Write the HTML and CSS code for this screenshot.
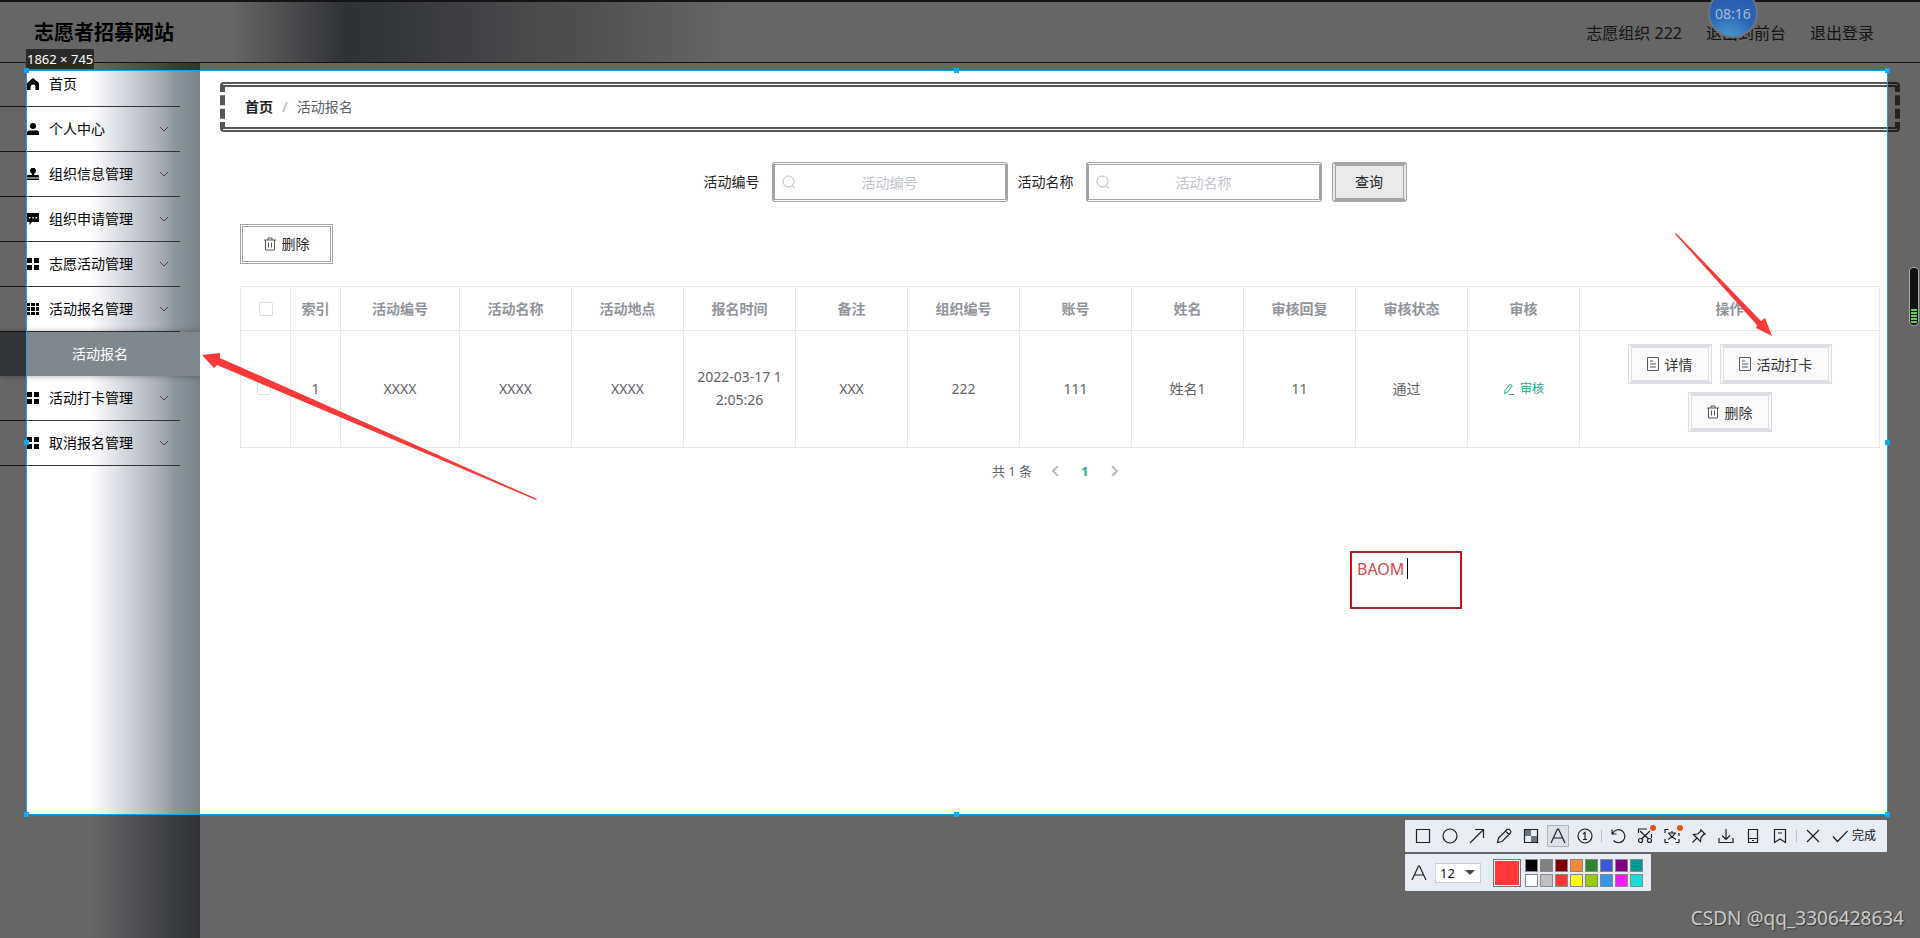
FILE: index.html
```html
<!DOCTYPE html>
<html lang="zh-CN">
<head>
<meta charset="utf-8">
<title>志愿者招募网站</title>
<link rel="stylesheet" href="styles.css">
</head>
<body>
<svg class="defs" aria-hidden="true">
  <symbol id="chev" viewBox="0 0 10 10"><path d="M1 3l4 4 4-4" fill="none" stroke="currentColor"/></symbol>
  <symbol id="grid4" viewBox="0 0 12 12"><path d="M0 0h5v5H0zM7 0h5v5H7zM0 7h5v5H0zM7 7h5v5H7z"/></symbol>
  <symbol id="grid9" viewBox="0 0 12 12"><path d="M0 0h3v3H0zM4 0h4v3H4zM9 0h3v3H9zM0 4h3v4H0zM4 4h4v4H4zM9 4h3v4H9zM0 9h3v3H0zM4 9h4v3H4zM9 9h3v3H9z"/></symbol>
  <symbol id="trash" viewBox="0 0 12 14"><path d="M0 3h12M4 3V1h4v2M1.500 3v10h9V3M4.500 5.500v5M7.500 5.500v5" fill="none" stroke="currentColor"/></symbol>
  <symbol id="doc" viewBox="0 0 12 14"><path d="M.5.5h11v13H.5zM3 4h3M3 7h6M3 10h6" fill="none" stroke="currentColor"/></symbol>
  <symbol id="search" viewBox="0 0 14 14"><circle cx="6.500" cy="6.500" r="5.500" fill="none" stroke="currentColor"/><path d="M10 11l3 2" stroke="currentColor"/></symbol>
</svg>
<div class="page">
  <header class="header">
    <h1 class="brand">志愿者招募网站</h1>
    <nav class="user">
      <span>志愿组织 222</span>
      <a href="#">退出到前台</a>
      <a href="#">退出登录</a>
    </nav>
  </header>
  <div class="body">
    <nav class="sidebar">
      <ul class="menu">
        <li><a class="item" href="#"><svg class="mi" viewBox="0 0 12 12"><path d="M6 0l6 5v7H8.500V8.500a2.500 2 0 0 0-5 0V12H0V5z"/></svg><span>首页</span></a></li>
        <li><a class="item" href="#"><svg class="mi" viewBox="0 0 12 12"><circle cx="6" cy="3" r="3"/><path d="M0 12V9.500Q0 7.500 2 7.500h8q2 0 2 2V12z"/></svg><span>个人中心</span><svg class="chev"><use href="#chev"/></svg></a></li>
        <li><a class="item" href="#"><svg class="mi" viewBox="0 0 12 12"><path d="M4.800 5.500a3 3 0 1 1 2.400 0V7H11q1 0 1 1v1.500H0V8q0-1 1-1h3.800zM0 10.500h12V12H0z"/></svg><span>组织信息管理</span><svg class="chev"><use href="#chev"/></svg></a></li>
        <li><a class="item" href="#"><svg class="mi" viewBox="0 0 12 12"><path d="M0 0h12v9H5l-2.500 3V9H0zM2 4v1.500h1.500V4zm3.300 0v1.500h1.500V4zm3.200 0v1.500H10V4z" fill-rule="evenodd"/></svg><span>组织申请管理</span><svg class="chev"><use href="#chev"/></svg></a></li>
        <li><a class="item" href="#"><svg class="mi"><use href="#grid4"/></svg><span>志愿活动管理</span><svg class="chev"><use href="#chev"/></svg></a></li>
        <li><a class="item" href="#"><svg class="mi"><use href="#grid9"/></svg><span>活动报名管理</span><svg class="chev"><use href="#chev"/></svg></a>
          <a class="sub" href="#">活动报名</a></li>
        <li><a class="item" href="#"><svg class="mi"><use href="#grid4"/></svg><span>活动打卡管理</span><svg class="chev"><use href="#chev"/></svg></a></li>
        <li><a class="item" href="#"><svg class="mi"><use href="#grid4"/></svg><span>取消报名管理</span><svg class="chev"><use href="#chev"/></svg></a></li>
      </ul>
    </nav>
    <main class="content">
      <div class="crumb"><a href="#">首页</a><i>/</i><span>活动报名</span></div>
      <section class="panel">
        <form class="search">
          <label for="f-no">活动编号</label>
          <div class="field"><svg class="lens"><use href="#search"/></svg><input id="f-no" type="text" placeholder="活动编号"></div>
          <label for="f-name">活动名称</label>
          <div class="field"><svg class="lens"><use href="#search"/></svg><input id="f-name" type="text" placeholder="活动名称"></div>
          <button class="query" type="button">查询</button>
        </form>
        <button class="remove" type="button"><svg class="bi"><use href="#trash"/></svg>删除</button>
        <table class="grid">
          <colgroup><col class="c-s"><col class="c-s"><col class="c-l"><col><col><col><col><col><col><col><col><col><col><col class="c-x"></colgroup>
          <thead><tr>
            <th><input type="checkbox" aria-label="全选"></th><th>索引</th><th>活动编号</th><th>活动名称</th><th>活动地点</th><th>报名时间</th><th>备注</th><th>组织编号</th><th>账号</th><th>姓名</th><th>审核回复</th><th>审核状态</th><th>审核</th><th>操作</th>
          </tr></thead>
          <tbody><tr>
            <td class="pick"><input type="checkbox" aria-label="选择第1行"></td><td>1</td><td>XXXX</td><td>XXXX</td><td>XXXX</td><td>2022-03-17 12:05:26</td><td>XXX</td><td>222</td><td>111</td><td>姓名1</td><td>11</td><td class="state">通过</td>
            <td><button class="audit" type="button"><svg viewBox="0 0 12 12"><path d="M2 7.500L7 1.200l2.200 1.700L4.500 9.200 1.600 10.600zM5.500 11.500H11" fill="none" stroke="currentColor"/></svg>审核</button></td>
            <td><div class="ops">
              <button type="button"><svg class="bi"><use href="#doc"/></svg>详情</button>
              <button type="button"><svg class="bi"><use href="#doc"/></svg>活动打卡</button>
              <button type="button"><svg class="bi"><use href="#trash"/></svg>删除</button>
            </div></td>
          </tr></tbody>
        </table>
        <div class="pager">
          <span>共 1 条</span>
          <button type="button" aria-label="上一页"><svg viewBox="0 0 10 10"><path d="M7 0L2 5l5 5"/></svg></button>
          <button class="now" type="button">1</button>
          <button type="button" aria-label="下一页"><svg viewBox="0 0 10 10"><path d="M3 0l5 5-5 5"/></svg></button>
        </div>
      </section>
    </main>
  </div>

  <div class="frame">
    <span class="size">1862 × 745</span>
    <b class="h tl"></b><b class="h tc"></b><b class="h tr"></b><b class="h ml"></b><b class="h mr"></b><b class="h bl"></b><b class="h bc"></b><b class="h br"></b>
    <div class="tools">
      <div class="bar">
        <button type="button" aria-label="矩形"><svg viewBox="0 0 20 20"><path d="M3.500 3.500h13v13h-13z"/></svg></button>
        <button type="button" aria-label="椭圆"><svg viewBox="0 0 20 20"><circle cx="10" cy="10" r="7"/></svg></button>
        <button type="button" aria-label="箭头"><svg viewBox="0 0 20 20"><path d="M3 17L16.500 3.500M8 3.500h8.500V12"/></svg></button>
        <button type="button" aria-label="画笔"><svg viewBox="0 0 20 20"><path d="M3.500 16.500l1-4.500L13 3.500q2-1 3.500 1 1 1.500 0 2.500L8 15.500zM11.500 5l3.500 3.500"/></svg></button>
        <button type="button" aria-label="马赛克"><svg viewBox="0 0 20 20"><path d="M3.500 3.500h13v13h-13z"/><path class="mz" d="M4 4h6v6H4zM10 10h6v6h-6z"/></svg></button>
        <button class="on" type="button" aria-label="文字"><svg viewBox="0 0 20 20"><path d="M3 17L9.500 3h1L17 17M5.500 12h9"/></svg></button>
        <button type="button" aria-label="序号"><svg viewBox="0 0 20 20"><circle cx="10" cy="10" r="7"/><path d="M8 8l2-1.500V13M8 13.500h4"/></svg></button>
        <hr>
        <button type="button" aria-label="撤销"><svg viewBox="0 0 20 20"><path d="M4 3.500v4.500h4.500M4.500 7.500A6.500 6.500 0 1 1 5.500 14.500"/></svg></button>
        <button type="button" aria-label="截图识别"><svg viewBox="0 0 20 20"><path d="M3.500 7V3H12M16.500 8v4M5 5l8.500 8M15 5l-8.500 8"/><circle cx="5.500" cy="14.500" r="2"/><circle cx="14.500" cy="14.500" r="2"/></svg><em></em></button>
        <button type="button" aria-label="翻译"><svg viewBox="0 0 20 20"><path d="M3 7V3.500h3.500M3 13v3.500h3.500M17 13v3.500h-3.500M17 7v3M6 7h8M10 5v2M6 13.500Q11 11 13 7.500M14 13.500Q9 11 7 7.500"/></svg><em></em></button>
        <button type="button" aria-label="固定"><svg viewBox="0 0 20 20"><path d="M3.500 16.500l5-5M4.500 8.500l7 7 .5-4 3-3.500 1.500.5-5-5 .5 1.500L8.500 8z"/></svg></button>
        <button type="button" aria-label="保存"><svg viewBox="0 0 20 20"><path d="M10 3v10M6 9.500l4 4 4-4M3 12v4.500h14V12"/></svg></button>
        <button type="button" aria-label="发送到手机"><svg viewBox="0 0 20 20"><path d="M5.500 3.500h9v13h-9zM5.500 12.500h9M9 14.500h2"/></svg></button>
        <button type="button" aria-label="收藏"><svg viewBox="0 0 20 20"><path d="M4.500 3.500h11v13L10 13l-5.500 3.500zM8 7h4"/></svg></button>
        <hr>
        <button type="button" aria-label="关闭"><svg viewBox="0 0 20 20"><path d="M4 4l12 12M16 4L4 16"/></svg></button>
        <button class="done" type="button"><svg viewBox="0 0 20 20"><path d="M3 10.500l4.500 5L17.500 5"/></svg>完成</button>
      </div>
      <div class="bar second">
        <svg class="ta" viewBox="0 0 20 20"><path d="M3 17L9.500 3h1L17 17M5.500 12h9"/></svg>
        <div class="pt"><select aria-label="字号"><option>12</option></select></div>
        <button class="cur" type="button" aria-label="当前颜色"></button>
        <div class="pal">
          <button class="k1" type="button" aria-label="黑"></button><button class="k2" type="button" aria-label="灰"></button><button class="k3" type="button" aria-label="深红"></button><button class="k4" type="button" aria-label="橙"></button><button class="k5" type="button" aria-label="绿"></button><button class="k6" type="button" aria-label="蓝"></button><button class="k7" type="button" aria-label="紫"></button><button class="k8" type="button" aria-label="青"></button>
          <button class="k9" type="button" aria-label="白"></button><button class="k10" type="button" aria-label="浅灰"></button><button class="k11" type="button" aria-label="红"></button><button class="k12" type="button" aria-label="黄"></button><button class="k13" type="button" aria-label="浅绿"></button><button class="k14" type="button" aria-label="浅蓝"></button><button class="k15" type="button" aria-label="品红"></button><button class="k16" type="button" aria-label="浅青"></button>
        </div>
      </div>
    </div>
  </div>
  <svg class="arrow a1" viewBox="0 0 336 148"><path d="M0 3L18 1 18 6 335 147 334 148 15 13 12 16z"/></svg>
  <svg class="arrow a2" viewBox="0 0 98 104"><path d="M97 103L81 95 82 92 0 1 1 0 86 88 90 85z"/></svg>
  <div class="note"><textarea aria-label="标注文字">BAOM</textarea><i></i></div>
  <div class="clock">08:16</div>
  <div class="meter"><i></i></div>
  <div class="mark">CSDN @qq_3306428634</div>
</div>
</body>
</html>
```
FILE: styles.css
```css
* { box-sizing: border-box; }
body {
  margin: 0;
  font: 14px/20px "Noto Sans", "Noto Sans CJK SC", sans-serif;
  color: #222;
  background: #fff;
}
a { color: inherit; text-decoration: none; }
button, input, select, textarea { font: inherit; color: inherit; margin: 0; }
button { padding: 0; border: 0; background: none; }
.defs { position: absolute; width: 0; height: 0; }
.page {
  position: relative;
  display: flex;
  flex-direction: column;
  min-height: 100vh;
  overflow: hidden;
}

/* header */
.header {
  display: flex;
  align-items: center;
  justify-content: space-between;
  height: 63px;
  padding: 2px 46px 0 34px;
  border-top: 2px solid #333;
  border-bottom: 1px solid #333;
  background: linear-gradient(90deg, #fff 0, #fff 12%, #d2d4d6 14%, #767d87 18%, #858b94 21%, #b3b5ba 27%, #cfd2d2 32%, #fff 38%);
}
.brand { margin: 0; font-size: 20px; line-height: 28px; color: #000; }
.user { display: flex; gap: 24px; font-size: 16px; line-height: 24px; color: #333; }

/* sidebar */
.body { display: flex; flex: 1; }
.sidebar {
  flex: none;
  width: 200px;
  overflow: hidden;
  background: linear-gradient(90deg, #fff 0, #fff 45%, #c8ccd4 67%, #a3a8b0 82%, #8c979e 87%, #78828a 100%);
}
.menu { list-style: none; margin: -1px 0 0; padding: 0; }
.item {
  display: flex;
  align-items: center;
  width: 180px;
  height: 45px;
  padding: 0 11px 0 27px;
  border-bottom: 1px solid #333;
  color: #000;
}
.mi { width: 12px; height: 12px; margin-right: 10px; fill: #000; }
.chev { width: 10px; height: 10px; margin-left: auto; color: #444; }
.sub {
  display: block;
  height: 44px;
  padding-left: 72px;
  line-height: 44px;
  color: #fff;
  background: #80888f;
  box-shadow: 0 0 6px rgba(0, 0, 0, .35);
}

/* content */
.content { flex: 1; min-width: 0; padding: 19px 20px; }
.crumb {
  display: flex;
  align-items: center;
  height: 50px;
  padding: 0 20px;
  border: 5px solid #555;
  border-style: double dashed;
  border-radius: 4px;
}
.crumb a { font-weight: 700; }
.crumb i { margin: 0 9px; font-style: normal; font-weight: 700; color: #c0c4cc; }
.crumb span { color: #606266; }
.panel { padding: 30px 20px 0; }
.search { display: flex; justify-content: center; align-items: center; gap: 10px; padding-right: 10px; }
.search label { margin-right: 2px; }
.field { position: relative; width: 236px; }
.field input {
  display: block;
  width: 100%;
  height: 40px;
  padding: 0 30px;
  border: 3px solid #a4a4a4;
  border-style: double solid;
  border-radius: 3px;
  background: #fff;
  text-align: center;
  outline: 0;
}
.field input::placeholder { color: #c0c4cc; opacity: 1; }
.lens { position: absolute; left: 10px; top: 13px; width: 14px; height: 14px; color: #b4b8c0; }
.query {
  width: 75px;
  height: 40px;
  border: 4px solid #a4a4a4;
  border-style: solid double;
  border-radius: 3px;
  background: #e9e9e9;
}
.bi { width: 12px; height: 14px; margin-right: 6px; color: #555; }
.remove {
  display: flex;
  align-items: center;
  justify-content: center;
  width: 93px;
  height: 40px;
  margin: 22px 0;
  border: 3px double #a4a4a4;
  background: #fff;
}
.grid {
  width: 100%;
  table-layout: fixed;
  border-collapse: collapse;
  line-height: 23px;
  text-align: center;
  color: #606266;
}
.grid th, .grid td { padding: 10px; border: 1px solid #e6e7ea; word-break: break-all; }
.grid td { padding: 9px 10px 11px; }
.grid th { color: #909399; font-weight: 700; }
.grid col { width: 112px; }
.grid .c-s { width: 50px; }
.grid .c-l { width: 119px; }
.grid .c-x { width: 300px; }
.grid .pick { padding-right: 14px; }
.grid th:nth-child(2) { padding: 10px 5px; }
.grid .state { padding-right: 20px; }
.grid input {
  appearance: none;
  display: block;
  width: 14px;
  height: 14px;
  margin: 0 auto;
  border: 1px solid #dcdfe6;
  border-radius: 2px;
  background: #fff;
}
.audit { font-size: 12px; color: #18a98a; }
.audit svg { width: 12px; height: 12px; margin-right: 5px; vertical-align: -2px; }
.ops { display: flex; flex-wrap: wrap; justify-content: center; gap: 8px; padding: 4px 20px; }
.ops button {
  display: flex;
  align-items: center;
  height: 40px;
  padding: 0 15px;
  border: 4px solid #dcdde5;
  border-style: solid double;
  background: #fafafa;
  color: #333;
}
.pager {
  display: flex;
  justify-content: center;
  align-items: center;
  padding-top: 11px;
  font-size: 13px;
  line-height: 24px;
  color: #606266;
}
.pager span { margin-right: 9px; }
.pager button { width: 29px; height: 24px; }
.pager svg { width: 10px; height: 10px; fill: none; stroke: #b5b8bf; stroke-width: 2; }
.pager .now { font-weight: 700; color: #18b38f; }

/* capture frame */
.frame {
  position: absolute;
  left: 26px;
  right: 32px;
  top: 70px;
  bottom: 123px;
  border: 1px solid #18a0e0;
  box-shadow: 0 0 0 4000px rgba(0, 0, 0, .6);
}
.size {
  position: absolute;
  left: -1px;
  bottom: 100%;
  margin-bottom: 2px;
  padding: 0 1px;
  background: #2a2a2a;
  color: #fff;
  font-size: 13px;
  line-height: 20px;
  white-space: nowrap;
}
.h { position: absolute; width: 5px; height: 5px; margin: -3px; background: #12a7f0; }
.tl, .ml, .bl { left: 0; }
.tr, .mr, .br { right: 0; }
.tc, .bc { left: 50%; }
.tl, .tc, .tr { top: 0; }
.bl, .bc, .br { bottom: 0; }
.ml, .mr { top: 50%; }
.tools {
  position: absolute;
  right: 0;
  top: 100%;
  display: flex;
  flex-direction: column;
  align-items: flex-start;
  gap: 2px;
  padding-top: 6px;
  color: #111;
}
.bar {
  display: flex;
  align-items: center;
  height: 32px;
  padding: 0 11px 0 8px;
  gap: 7px;
  background: #e8ecf5;
  border-radius: 1px;
}
.bar svg { display: block; width: 20px; height: 20px; fill: none; stroke: #1c1f26; stroke-width: 1.2; }
.bar .mz { fill: #6d7280; stroke: none; }
.bar button { position: relative; width: 20px; height: 20px; flex: none; }
.bar .on { background: #dde0e8; box-shadow: 0 0 0 1px #b0b3bc; }
.bar em { position: absolute; right: -1px; top: -1px; width: 6px; height: 6px; border-radius: 50%; background: #e8541a; }
.bar hr { width: 1px; height: 12px; margin: 0 -1px; border: 0; background: #b8bcc6; }
.bar .done { display: flex; align-items: center; gap: 2px; width: auto; font-size: 12px; }
.second { height: 37px; padding: 0 8px 0 4px; gap: 0; }
.pt { position: relative; margin: 0 12px 0 6px; }
.pt select {
  appearance: none;
  display: block;
  width: 46px;
  height: 20px;
  padding: 0 4px;
  border: 1px solid #c8cbd2;
  border-radius: 0;
  background: #fff;
  font-size: 13px;
  line-height: 18px;
}
.pt::after {
  content: "";
  position: absolute;
  right: 6px;
  top: 7px;
  border: 5px solid transparent;
  border-top-color: #444;
  border-bottom: 0;
}
.bar .cur { width: 28px; height: 28px; margin-right: 4px; border: 1px solid #777; background: #ff3838; box-shadow: inset 0 0 0 1px #fff; }
.pal { display: grid; grid-template-columns: repeat(8, 13px); gap: 2px; }
.bar .pal button { width: 13px; height: 13px; border: 1px solid #888; }
.k1 { background: #000; }
.k2 { background: #808080; }
.k3 { background: #800000; }
.k4 { background: #f7883a; }
.k5 { background: #308430; }
.k6 { background: #385ad3; }
.k7 { background: #800080; }
.k8 { background: #009999; }
.k9 { background: #fff; }
.k10 { background: #c0c0c0; }
.k11 { background: #fb3838; }
.k12 { background: #ff0; }
.k13 { background: #99cc00; }
.k14 { background: #3894e4; }
.k15 { background: #f31bf3; }
.k16 { background: #16dcdc; }

/* annotations over the capture */
.arrow { position: absolute; fill: #f93a38; }
.a1 { left: 202px; top: 352px; width: 336px; height: 148px; }
.a2 { left: 1675px; top: 233px; width: 98px; height: 104px; }
.note { position: absolute; left: 1350px; top: 551px; }
.note textarea {
  display: block;
  width: 112px;
  height: 58px;
  padding: 5px;
  border: 2px solid #d8090d;
  border-color: #a3262a #d8090d;
  background: none;
  color: #d4494a;
  font-size: 16px;
  line-height: 22px;
  resize: none;
  overflow: hidden;
  outline: 0;
}
.note i { position: absolute; left: 57px; top: 7px; width: 1px; height: 21px; background: #000; }
.clock {
  position: absolute;
  left: 1708px;
  top: -12px;
  width: 50px;
  height: 50px;
  border: 2px solid #6f7580;
  border-radius: 50%;
  background: radial-gradient(circle at 40% 110%, #4a9ccc 0, #3a84c4 25%, #2b66b8 45%, #2b55a8 100%);
  color: #a9bcd8;
  line-height: 48px;
  text-align: center;
}
.meter {
  position: absolute;
  right: 1px;
  top: 267px;
  width: 10px;
  height: 59px;
  padding: 41px 1px 0;
  border: 1px solid #aaa;
  border-radius: 4px;
  background: #111;
}
.meter i { display: block; height: 14px; background: repeating-linear-gradient(#5fd05f 0, #5fd05f 2px, #111 2px, #111 3px); }
.mark {
  position: absolute;
  right: 16px;
  bottom: 8px;
  color: #ccc;
  font-size: 19px;
  line-height: 24px;
  text-shadow: 1px 1px 1px #333;
}
```
